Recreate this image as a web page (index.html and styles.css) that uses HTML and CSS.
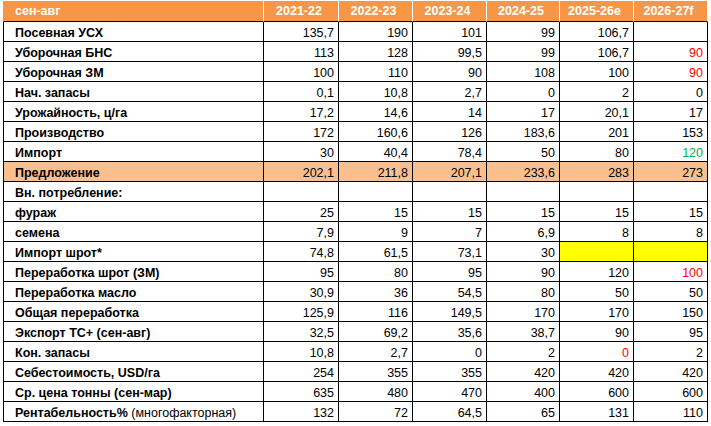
FILE: index.html
```html
<!DOCTYPE html>
<html lang="ru">
<head>
<meta charset="utf-8">
<title>сен-авг</title>
<link rel="stylesheet" href="styles.css">
</head>
<body>
<table class="sheet">
  <colgroup>
    <col class="c-label"><col class="c-a"><col class="c-b"><col class="c-b"><col class="c-c"><col class="c-b"><col class="c-b">
  </colgroup>
  <thead>
    <tr class="head">
      <th class="lbl">сен-авг</th><th>2021-22</th><th>2022-23</th><th>2023-24</th><th>2024-25</th><th>2025-26e</th><th>2026-27f</th>
    </tr>
  </thead>
  <tbody>
    <tr><td class="lbl">Посевная УСХ</td><td>135,7</td><td>190</td><td>101</td><td>99</td><td>106,7</td><td></td></tr>
    <tr><td class="lbl">Уборочная БНС</td><td>113</td><td>128</td><td>99,5</td><td>99</td><td>106,7</td><td class="red">90</td></tr>
    <tr><td class="lbl">Уборочная ЗМ</td><td>100</td><td>110</td><td>90</td><td>108</td><td>100</td><td class="red">90</td></tr>
    <tr><td class="lbl">Нач. запасы</td><td>0,1</td><td>10,8</td><td>2,7</td><td>0</td><td>2</td><td>0</td></tr>
    <tr><td class="lbl">Урожайность, ц/га</td><td>17,2</td><td>14,6</td><td>14</td><td>17</td><td>20,1</td><td>17</td></tr>
    <tr><td class="lbl">Производство</td><td>172</td><td>160,6</td><td>126</td><td>183,6</td><td>201</td><td>153</td></tr>
    <tr><td class="lbl">Импорт</td><td>30</td><td>40,4</td><td>78,4</td><td>50</td><td>80</td><td class="green">120</td></tr>
    <tr class="supply"><td class="lbl">Предложение</td><td>202,1</td><td>211,8</td><td>207,1</td><td>233,6</td><td>283</td><td>273</td></tr>
    <tr><td class="lbl">Вн. потребление:</td><td></td><td></td><td></td><td></td><td></td><td></td></tr>
    <tr><td class="lbl">фураж</td><td>25</td><td>15</td><td>15</td><td>15</td><td>15</td><td>15</td></tr>
    <tr><td class="lbl">семена</td><td>7,9</td><td>9</td><td>7</td><td>6,9</td><td>8</td><td>8</td></tr>
    <tr><td class="lbl">Импорт шрот*</td><td>74,8</td><td>61,5</td><td>73,1</td><td>30</td><td class="yellow"></td><td class="yellow"></td></tr>
    <tr><td class="lbl">Переработка шрот (ЗМ)</td><td>95</td><td>80</td><td>95</td><td>90</td><td>120</td><td class="red">100</td></tr>
    <tr><td class="lbl">Переработка масло</td><td>30,9</td><td>36</td><td>54,5</td><td>80</td><td>50</td><td>50</td></tr>
    <tr><td class="lbl">Общая переработка</td><td>125,9</td><td>116</td><td>149,5</td><td>170</td><td>170</td><td>150</td></tr>
    <tr><td class="lbl">Экспорт ТС+ (сен-авг)</td><td>32,5</td><td>69,2</td><td>35,6</td><td>38,7</td><td>90</td><td>95</td></tr>
    <tr><td class="lbl">Кон. запасы</td><td>10,8</td><td>2,7</td><td>0</td><td>2</td><td class="red">0</td><td>2</td></tr>
    <tr><td class="lbl">Себестоимость, USD/га</td><td>254</td><td>355</td><td>355</td><td>420</td><td>420</td><td>420</td></tr>
    <tr><td class="lbl">Ср. цена тонны (сен-мар)</td><td>635</td><td>480</td><td>470</td><td>400</td><td>600</td><td>600</td></tr>
    <tr><td class="lbl">Рентабельность% <span class="thin">(многофакторная)</span></td><td>132</td><td>72</td><td>64,5</td><td>65</td><td>131</td><td>110</td></tr>
  </tbody>
</table>
</body>
</html>
```

FILE: styles.css
```css
html, body {
  margin: 0;
  padding: 0;
  background: #ffffff;
}

.sheet {
  margin: 1px 0 0 3px;
  border-collapse: separate;
  border-spacing: 0;
  table-layout: fixed;
  width: 705px;
  font-family: "Liberation Sans", Arial, sans-serif;
  font-size: 12.5px;
  color: #000000;
}

.c-label { width: 261px; }
.c-a { width: 75px; }
.c-b { width: 74px; }
.c-c { width: 73px; }

.sheet th,
.sheet td {
  box-sizing: border-box;
  height: 20px;
  padding: 4px 4px 0 0;
  line-height: 15px;
  text-align: right;
  vertical-align: top;
  white-space: nowrap;
  overflow: hidden;
  border-right: 1px solid #000000;
  border-bottom: 1px solid #000000;
}

.sheet td:first-child {
  border-left: 1px solid #000000;
}

.head th {
  height: 21px;
  padding-top: 3px;
  background: #f79646;
  color: #ffffff;
  font-weight: bold;
  text-align: center;
  border-right: 1px solid #ffffff;
  border-bottom: 1px solid #000000;
}

.head th:first-child {
  border-left: 1px solid #f79646;
}

.sheet .lbl {
  text-align: left;
  padding-left: 11px;
  font-weight: bold;
}

.thin {
  font-weight: normal;
}

.supply td {
  background: #fabf8f;
}

.yellow {
  background: #ffff00;
}

.red {
  color: #ff0000;
}

.green {
  color: #00b050;
}
```
